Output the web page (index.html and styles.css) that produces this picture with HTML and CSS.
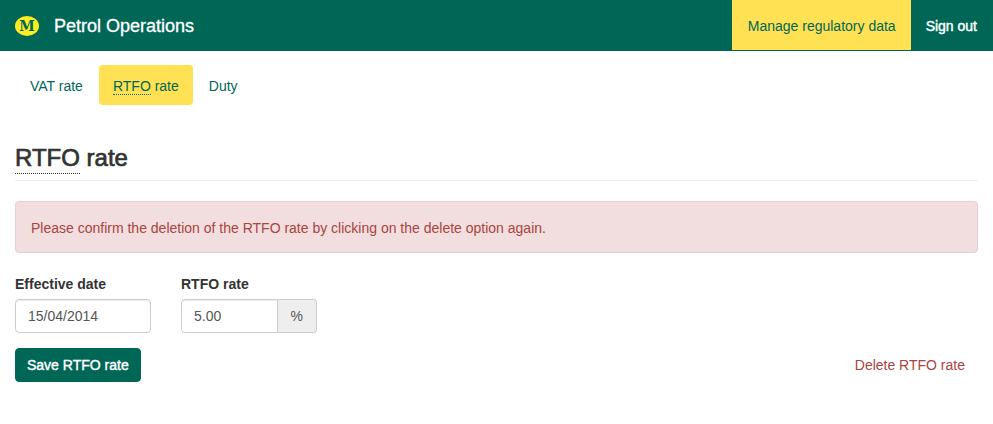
FILE: index.html
```html
<!DOCTYPE html>
<html lang="en">
<head>
<meta charset="utf-8">
<meta name="viewport" content="width=device-width, initial-scale=1">
<title>Petrol Operations</title>
<link rel="stylesheet" href="styles.css">
</head>
<body>
<header class="navbar">
  <a class="brand" href="#">
    <svg class="logo" viewBox="0 0 24 20" aria-hidden="true">
      <ellipse cx="12" cy="10" rx="12" ry="10"/>
      <text x="12" y="15" text-anchor="middle">M</text>
    </svg>
    <span class="brand-name">Petrol Operations</span>
  </a>
  <nav class="navbar-links">
    <a class="nav-link active" href="#">Manage regulatory data</a>
    <a class="nav-link medium" href="#">Sign out</a>
  </nav>
</header>
<main class="content">
  <nav class="pills">
    <a class="pill" href="#">VAT rate</a>
    <a class="pill active" href="#"><abbr>RTFO</abbr> rate</a>
    <a class="pill" href="#">Duty</a>
  </nav>
  <h1 class="page-header"><abbr>RTFO</abbr> rate</h1>
  <div class="alert" role="alert">Please confirm the deletion of the RTFO rate by clicking on the delete option again.</div>
  <form>
    <div class="fields">
      <div class="field">
        <label for="date">Effective date</label>
        <input class="control" id="date" type="text" value="15/04/2014">
      </div>
      <div class="field">
        <label for="rate">RTFO rate</label>
        <div class="input-group">
          <input class="control" id="rate" type="text" value="5.00">
          <span class="addon">%</span>
        </div>
      </div>
    </div>
    <div class="actions">
      <button class="btn save medium" type="submit">Save RTFO rate</button>
      <button class="btn delete" type="button">Delete RTFO rate</button>
    </div>
  </form>
</main>
</body>
</html>
```
FILE: styles.css
```css
* {
  box-sizing: border-box;
}

body {
  margin: 0;
  background: #fff;
  color: #333;
  font: 14px/20px "Liberation Sans", Arial, sans-serif;
}

a {
  text-decoration: none;
}

abbr {
  border-bottom: 1px dotted currentColor;
}

.medium {
  -webkit-text-stroke: 0.4px currentColor;
}

.navbar {
  display: flex;
  justify-content: space-between;
  background: #006757;
  border-bottom: 1px solid #006757;
}

.brand {
  display: flex;
  align-items: center;
  gap: 15px;
  padding: 2px 15px 0;
  color: #fff;
  font-size: 18px;
}

.brand-name {
  -webkit-text-stroke: 0.3px currentColor;
}

.logo {
  width: 24px;
  height: 20px;
}

.logo ellipse {
  fill: #ffed24;
}

.logo text {
  fill: #006757;
  font: bold 14px "DejaVu Serif", serif;
}

.navbar-links {
  display: flex;
}

.nav-link {
  padding: 16px 16px 14px 15px;
  color: #fff;
}

.nav-link.active {
  padding-left: 16px;
  padding-right: 15px;
  background: #ffe153;
  color: #006757;
}

.content {
  padding: 14px 15px;
}

.pills {
  display: flex;
  gap: 2px;
  padding-left: 1px;
}

.pill {
  padding: 11px 14px 9px;
  border-radius: 4px;
  color: #006757;
}

.pill.active {
  background: #ffe153;
}

.page-header {
  margin: 40px 0 20px;
  padding-bottom: 9px;
  border-bottom: 1px solid #eee;
  font-size: 24px;
  font-weight: normal;
  line-height: 26px;
  -webkit-text-stroke: 0.7px currentColor;
}

.page-header abbr {
  padding-bottom: 2px;
}

.alert {
  margin-bottom: 20px;
  padding: 16px 15px 14px;
  border: 1px solid #ebccd1;
  border-radius: 4px;
  background: #f2dede;
  color: #a94442;
}

.fields {
  display: flex;
  gap: 30px;
  margin-bottom: 15px;
}

.field {
  width: 136px;
}

.field label {
  display: block;
  margin-bottom: 5px;
  padding-top: 1px;
  font-weight: bold;
}

.control {
  display: block;
  width: 100%;
  height: 34px;
  padding: 6px 12px;
  border: 1px solid #ccc;
  border-radius: 4px;
  background: #fff;
  box-shadow: inset 0 1px 1px rgba(0, 0, 0, 0.075);
  color: #555;
  font: inherit;
}

.input-group {
  display: flex;
}

.input-group .control {
  flex: 1;
  min-width: 0;
  border-radius: 4px 0 0 4px;
}

.addon {
  padding: 6px 13px;
  border: 1px solid #ccc;
  border-left: 0;
  border-radius: 0 4px 4px 0;
  background: #eee;
  color: #555;
}

.actions {
  display: flex;
  justify-content: space-between;
}

.btn {
  height: 34px;
  padding: 6px 12px;
  border: 1px solid transparent;
  border-radius: 4px;
  background: none;
  font: inherit;
  cursor: pointer;
}

.save {
  padding: 6px 11px;
  border-color: #006757;
  background: #006757;
  color: #fff;
}

.delete {
  color: #a94442;
}
```
